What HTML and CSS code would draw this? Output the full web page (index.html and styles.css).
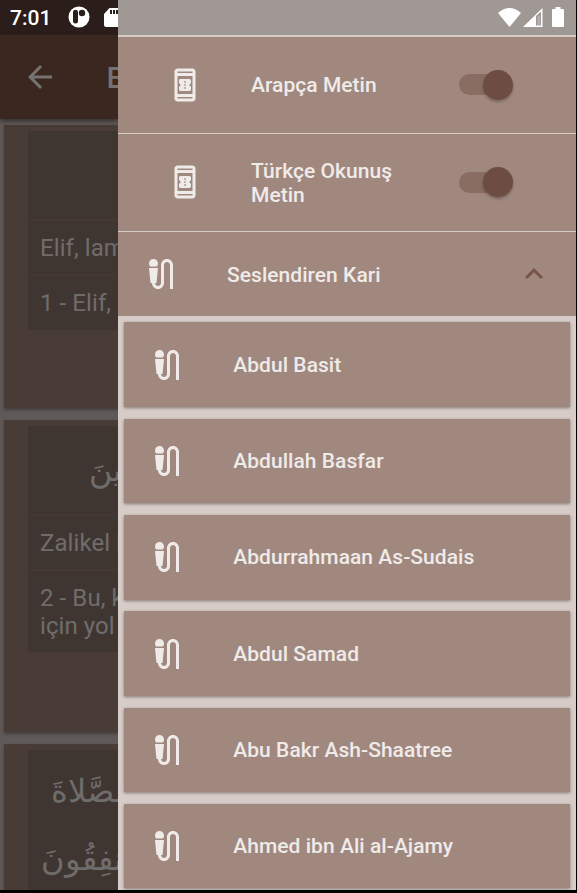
FILE: index.html
```html
<!DOCTYPE html>
<html lang="tr">
<head>
<meta charset="utf-8">
<title>Bakara</title>
<link rel="stylesheet" href="styles.css">
</head>
<body>
<svg class="defs" width="0" height="0">
  <symbol id="ticket" viewBox="0 0 24 24"><path d="M17,1H7C5.9,1,5,1.9,5,3v18c0,1.1,0.9,2,2,2h10c1.1,0,2-0.9,2-2V3C19,1.9,18.1,1,17,1z M7,4V3h10v1H7z M7,18V6h10v12H7z M7,21v-1h10v1H7z M16,11V9.14C16,8.51,15.55,8,15,8H9C8.45,8,8,8.51,8,9.14V11c.55,0,1,.45,1,1s-.45,1-1,1v1.86C8,15.49,8.45,16,9,16h6c.55,0,1-.51,1-1.14V13c-.55,0-1-.45-1-1S15.450,11,16,11z M12.5,14.5h-1v-1h1z M12.5,12.500h-1v-1h1z M12.5,10.5h-1v-1h1z" fill-rule="evenodd"/></symbol>
  <symbol id="mic" viewBox="0 0 24 24"><path d="M9.22,7H4.78C4.3,6.47,4,5.77,4,5c0-1.66,1.34-3,3-3s3,1.34,3,3C10,5.77,9.7,6.47,9.22,7z M16,2c-2.21,0-4,1.79-4,4v12c0,1.1-.9,2-2,2s-2-.9-2-2h1l1-10H4l1,10h1c0,2.21,1.79,4,4,4s4-1.79,4-4V6c0-1.1,.9-2,2-2s2,.9,2,2v16h2V6C20,3.79,18.21,2,16,2z"/></symbol>
</svg>
<div class="screen">
  <main class="page">
    <div class="status">
      <span class="time">7:01</span>
      <svg class="app-icon" viewBox="0 0 22 22"><circle cx="11" cy="11" r="10.5" fill="#fff"/><rect x="5" y="3.800" width="5" height="13.800" rx="2.500" fill="#2a1d1a"/><circle cx="14" cy="7" r="3.200" fill="#2a1d1a"/></svg>
      <svg class="sd-icon" viewBox="0 0 16 19"><path d="M5.500 0H16V19H2Q0 19 0 17V6Z" fill="#fff"/><path d="M6 2h2v4H6zM9 2h2v4H9zM12 2h2v4h-2z" fill="#2a1d1a"/></svg>
    </div>
    <header class="appbar">
      <svg class="back" viewBox="0 0 24 24"><path d="M20 11H7.830l5.590-5.590L12 4l-8 8 8 8 1.410-1.410L7.830 13H20z"/></svg>
      <h1>Bakara</h1>
    </header>
    <div class="verses">
      <article class="verse first">
        <div class="cell arabic"></div>
        <div class="cell">Elif, lam, mim.</div>
        <div class="cell">1 - Elif, Lam, Mim.</div>
      </article>
      <article class="verse second">
        <div class="cell arabic"><span class="muttakin" dir="rtl">لِّلْمُتَّقِينَ</span></div>
        <div class="cell">Zalikel kitabu</div>
        <div class="cell">2 - Bu, kendisinde<br>için yol gösterici</div>
      </article>
      <article class="verse third">
        <div class="cell arabic"><span class="salat" dir="rtl">الصَّلاةَ</span><span class="infak" dir="rtl">يُنفِقُونَ</span></div>
      </article>
    </div>
  </main>
  <aside class="drawer">
    <div class="drawer-status">
      <svg class="wifi" viewBox="0 0 22 18"><path d="M0 4.800Q11-4.800 22 4.800L11 18Z"/></svg>
      <svg class="signal" viewBox="0 0 20 19"><path fill-rule="evenodd" d="M19.500 0V19H0ZM13 8V17.500H18V3.500L13 8Z"/><path d="M14.500 9L17 7V17.500H14.500Z" opacity=".25"/></svg>
      <svg class="battery" viewBox="0 0 12 20"><path d="M3.500 0h5v2H11q1 0 1 1V19q0 1-1 1H1q-1 0-1-1V3q0-1 1-1h2.500z"/></svg>
    </div>
    <div class="setting"><svg class="icon"><use href="#ticket"/></svg><span class="label">Arapça Metin</span><i class="switch"></i></div>
    <div class="setting"><svg class="icon"><use href="#ticket"/></svg><span class="label">Türkçe Okunuş Metin</span><i class="switch"></i></div>
    <div class="expander"><svg class="icon"><use href="#mic"/></svg><span class="label">Seslendiren Kari</span><svg class="chevron" viewBox="0 0 24 24"><path d="M12 8l-6 6 1.410 1.410L12 10.830l4.590 4.580L18 14z"/></svg></div>
    <div class="reciters">
      <div class="reciter"><svg class="icon"><use href="#mic"/></svg><span class="label">Abdul Basit</span></div>
      <div class="reciter"><svg class="icon"><use href="#mic"/></svg><span class="label">Abdullah Basfar</span></div>
      <div class="reciter"><svg class="icon"><use href="#mic"/></svg><span class="label">Abdurrahmaan As-Sudais</span></div>
      <div class="reciter"><svg class="icon"><use href="#mic"/></svg><span class="label">Abdul Samad</span></div>
      <div class="reciter"><svg class="icon"><use href="#mic"/></svg><span class="label">Abu Bakr Ash-Shaatree</span></div>
      <div class="reciter"><svg class="icon"><use href="#mic"/></svg><span class="label">Ahmed ibn Ali al-Ajamy</span></div>
    </div>
  </aside>
</div>
</body>
</html>
```
FILE: styles.css
```css
* { box-sizing: border-box; }
body { margin: 0; width: 577px; height: 893px; overflow: hidden; background: #000; font-family: Roboto, sans-serif; }
svg { display: block; flex: none; }
.defs { display: none; }
.screen { position: relative; width: 576px; height: 890px; overflow: hidden; background: #5f5a57; }
.page { width: 119px; height: 890px; overflow: hidden; color: #6f6d6b; }
.status { height: 35px; background: #2a1d1a; display: flex; align-items: center; padding-left: 10px; }
.time { color: #fff; font-size: 21px; font-weight: 500; width: 58px; flex: none; }
.app-icon { width: 22px; height: 22px; margin: 0 0 1px -.5px; }
.sd-icon { width: 16px; height: 19px; margin-left: 14px; }
.appbar { height: 84px; background: #392720; display: flex; align-items: center; padding-left: 22px; box-shadow: 0 2px 5px #302b29; position: relative; }
.back { width: 36px; height: 36px; fill: #757371; }
.appbar h1 { margin: 0 0 0 48.500px; font-size: 30px; font-weight: 500; color: #757371; }
.verses { padding: 6px 0 0 4px; }
.verse { width: 568px; background: #493c37; padding: 6px 24px 0; margin-bottom: 12px; box-shadow: 0 2px 3px #443e3b; }
.first { height: 283px; }
.second { height: 312px; }
.third { height: 300px; }
.cell { background: #403631; padding: 13px 12px 11px; font-size: 24px; line-height: 28.500px; letter-spacing: .08px; white-space: nowrap; border-bottom: 2px solid #433833; min-height: 54.500px; }
.cell:last-child { border-bottom: 0; }
.arabic { height: 90px; padding: 0; font-size: 32px; line-height: 68px; letter-spacing: 0; overflow: hidden; }
.third .arabic { height: 290px; }
.arabic span { display: block; width: max-content; }
.muttakin { margin: 10px 0 0 61px; }
.salat { margin: 7px 0 0 23px; }
.infak { margin-left: 13px; }
.drawer { position: absolute; left: 118px; top: 0; width: 458px; height: 890px; background: #d7ccc8; color: #efebe9; overflow: hidden; }
.drawer-status { height: 35px; background: #a09894; display: flex; align-items: center; padding: 0 12px 1px 379.500px; fill: #fff; }
.wifi { width: 23px; height: 19px; }
.signal { width: 20px; height: 19px; margin-left: 2px; }
.battery { width: 12px; height: 20px; margin-left: 9px; }
.setting, .expander, .reciter { background: #a1887f; display: flex; align-items: center; }
.label { font-size: 21px; font-weight: 500; line-height: 24px; letter-spacing: .04px; flex: none; }
.icon { width: 36px; height: 36px; fill: #efebe9; }
.setting { height: 96.300px; margin-top: 1.500px; padding-left: 48.500px; }
.setting .label { width: 175px; margin-left: 48.500px; padding-top: 1px; }
.switch { width: 49.500px; height: 21px; border-radius: 11px; background: #896d62; margin-left: 33px; display: flex; align-items: center; }
.switch::after { content: ""; width: 30px; height: 30px; flex: none; border-radius: 50%; background: #6d4c41; margin-left: 24px; box-shadow: 0 2px 3px #0004; }
.expander { height: 84.500px; margin-top: 1.200px; padding: 0 24.500px; }
.expander .label { width: 271px; margin-left: 48.500px; padding-top: 1px; }
.chevron { width: 36px; height: 36px; fill: #795548; margin-left: 18px; }
.reciters { padding: 6.200px 6px 0 6.300px; display: grid; gap: 11.800px; }
.reciter { height: 84.500px; padding-left: 24.500px; box-shadow: 0 1px 3px #0006; }
.reciter .label { margin-left: 48.500px; }
```
